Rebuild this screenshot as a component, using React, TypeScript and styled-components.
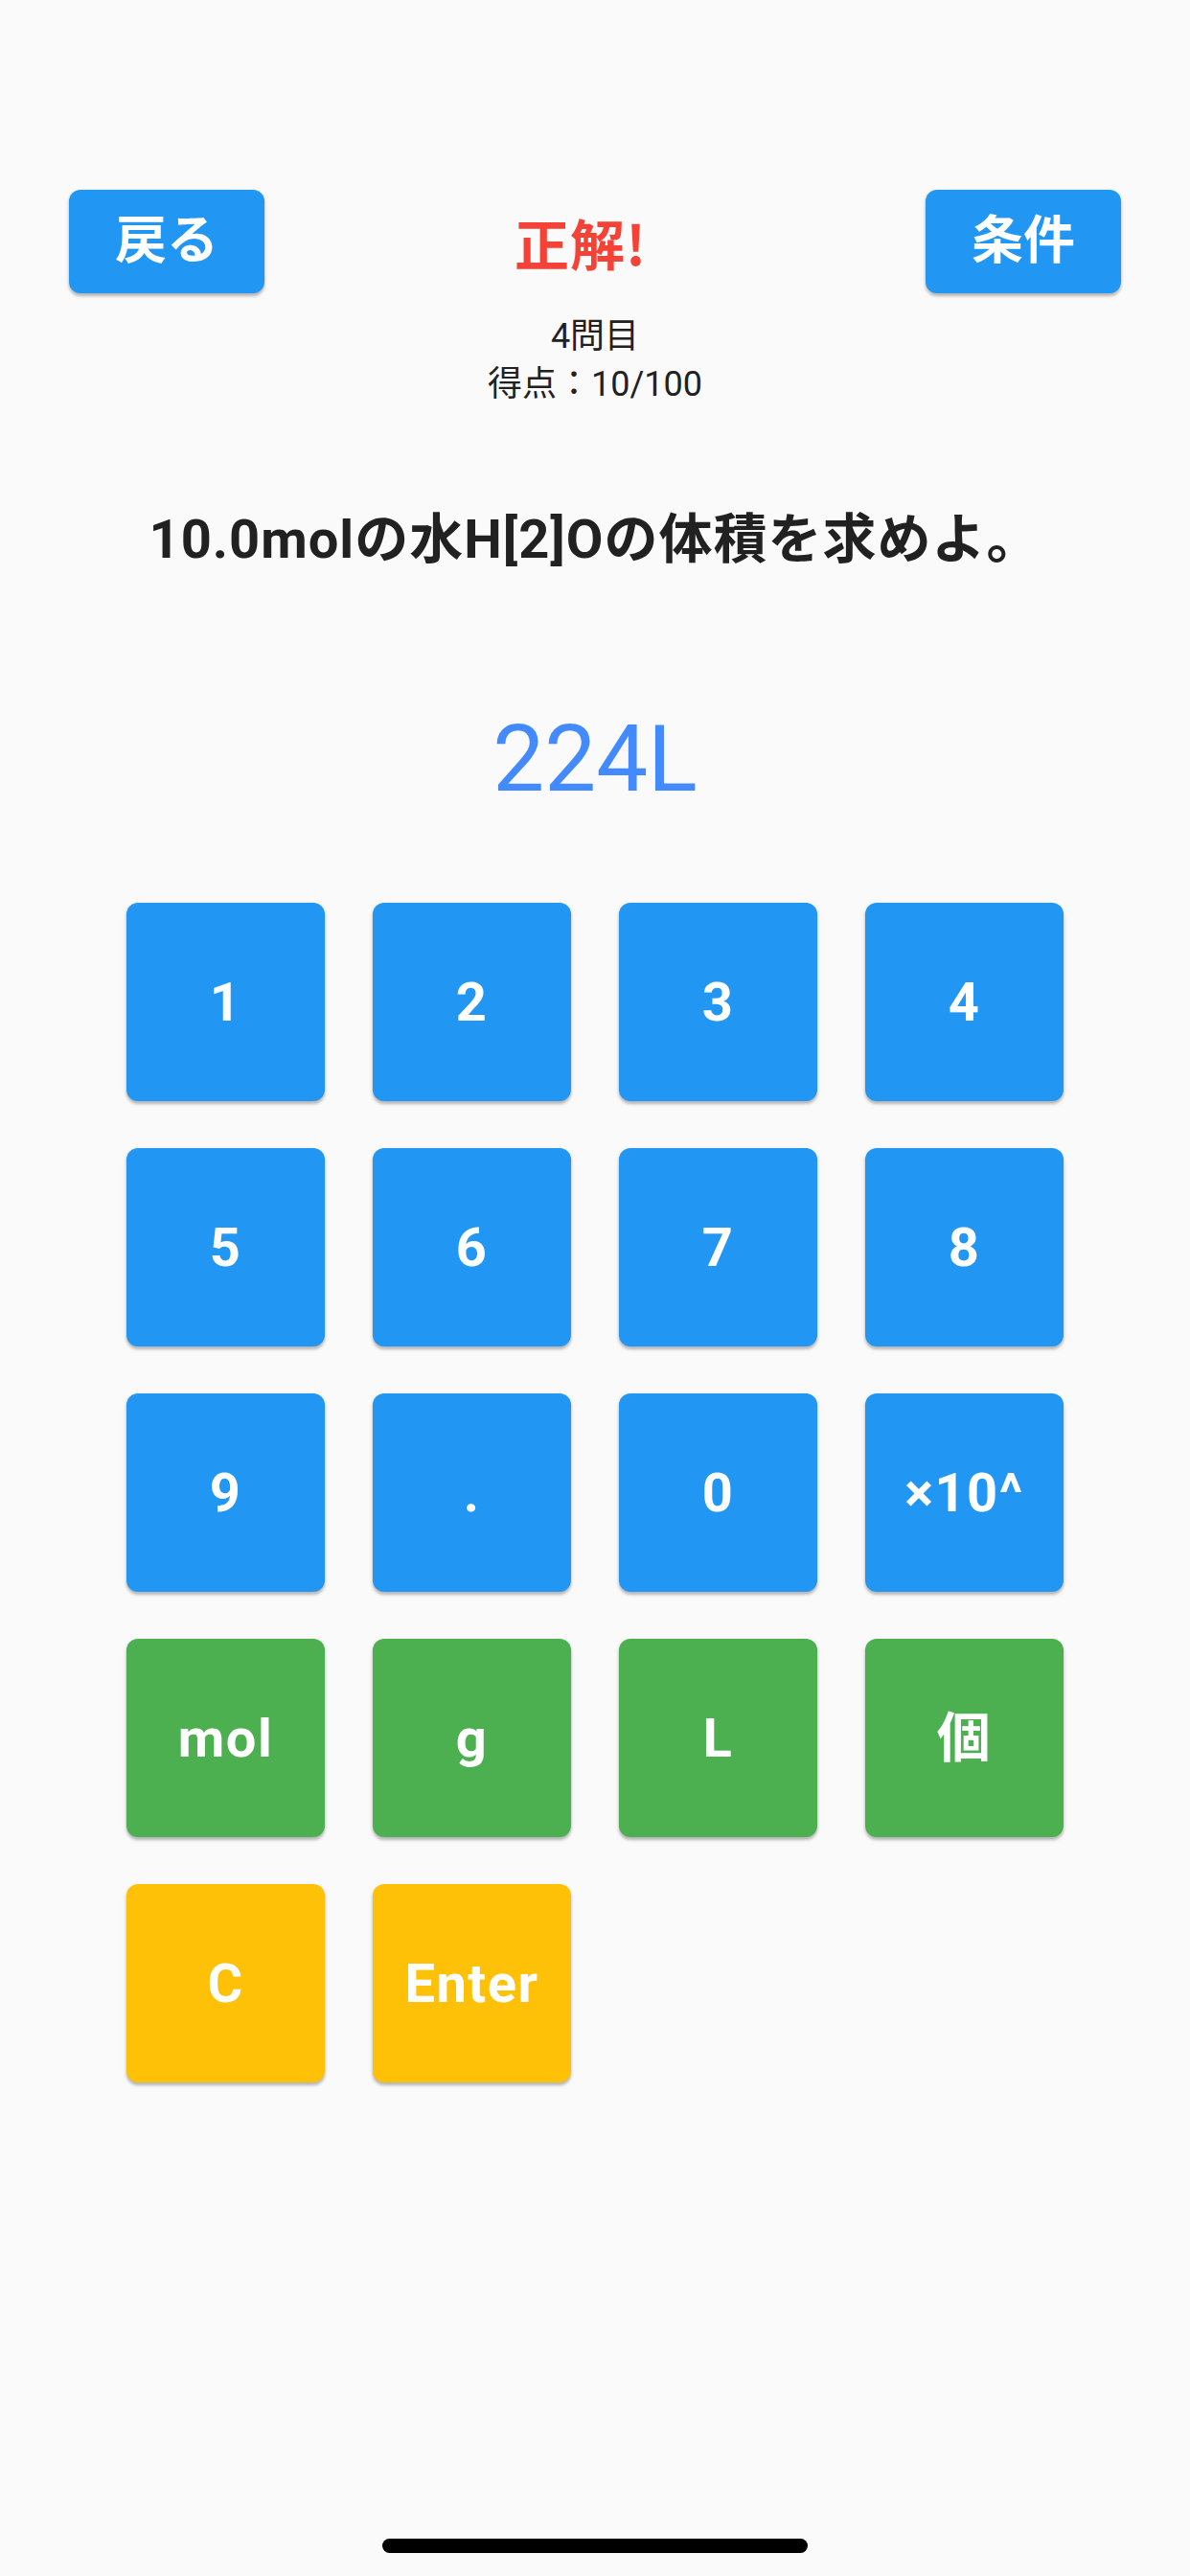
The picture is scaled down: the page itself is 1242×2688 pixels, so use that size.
import React from "react";
import styled, { createGlobalStyle } from "styled-components";

const GlobalStyle = createGlobalStyle`
  html, body {
    margin: 0;
    padding: 0;
    background: #fafafa;
  }
  * { box-sizing: border-box; }
`;

const FONT = `"Roboto", "Noto Sans CJK JP", sans-serif`;

const Page = styled.div`
  width: 1242px;
  min-height: 2688px;
  background: #fafafa;
  display: flex;
  flex-direction: column;
  align-items: stretch;
  font-family: ${FONT};
  color: #212121;
`;

const Header = styled.header`
  display: grid;
  grid-template-columns: 204px 1fr 204px;
  align-items: center;
  padding: 198px 72px 0;
`;

const HeaderButton = styled.button`
  height: 108px;
  width: 204px;
  border: none;
  border-radius: 12px;
  background: #2196f3;
  color: #ffffff;
  font-family: ${FONT};
  font-weight: 700;
  font-size: 54px;
  line-height: 1;
  padding: 0;
  box-shadow: 0 3px 3px rgba(0, 0, 0, 0.2), 0 2px 5px rgba(0, 0, 0, 0.12);
  display: flex;
  align-items: center;
  justify-content: center;
`;

const Title = styled.h1`
  margin: 0;
  padding-right: 30px;
  text-align: center;
  color: #f44336;
  font-family: "Noto Sans CJK JP", sans-serif;
  font-size: 57px;
  font-weight: 700;
  line-height: 1;
  letter-spacing: 1px;
`;

const Info = styled.div`
  margin-top: 20px;
  display: flex;
  flex-direction: column;
  align-items: center;
`;

const InfoLine = styled.div`
  font-size: 36px;
  line-height: 50px;
  font-weight: 400;
  color: #212121;
`;

const Question = styled.p`
  margin: 99px 0 0;
  text-align: center;
  font-size: 56px;
  line-height: 76px;
  font-weight: 700;
  color: #212121;
  letter-spacing: 1px;
`;

const Answer = styled.div`
  margin-top: 137px;
  text-align: center;
  font-size: 96px;
  line-height: 108px;
  font-weight: 400;
  color: #448aff;
`;

const Keypad = styled.div`
  margin-top: 96px;
  display: grid;
  grid-template-columns: repeat(4, 207px);
  grid-auto-rows: 207px;
  column-gap: 50px;
  row-gap: 49px;
  justify-content: center;
`;

type KeyKind = "num" | "unit" | "action";

const KEY_COLORS: Record<KeyKind, string> = {
  num: "#2196f3",
  unit: "#4caf50",
  action: "#ffc107",
};

const Key = styled.button<{ $kind: KeyKind }>`
  border: none;
  border-radius: 12px;
  background: ${(p) => KEY_COLORS[p.$kind]};
  color: #ffffff;
  font-family: ${FONT};
  font-weight: 700;
  font-size: 56px;
  letter-spacing: 1.5px;
  line-height: 1;
  padding: 0;
  box-shadow: 0 3px 3px rgba(0, 0, 0, 0.2), 0 2px 5px rgba(0, 0, 0, 0.12);
  display: flex;
  align-items: center;
  justify-content: center;
  white-space: nowrap;
`;

const HomeIndicator = styled.div`
  margin: auto auto 24px;
  width: 444px;
  height: 15px;
  border-radius: 8px;
  background: #000000;
`;

const keys: { label: string; kind: KeyKind }[] = [
  { label: "1", kind: "num" },
  { label: "2", kind: "num" },
  { label: "3", kind: "num" },
  { label: "4", kind: "num" },
  { label: "5", kind: "num" },
  { label: "6", kind: "num" },
  { label: "7", kind: "num" },
  { label: "8", kind: "num" },
  { label: "9", kind: "num" },
  { label: ".", kind: "num" },
  { label: "0", kind: "num" },
  { label: "×10^", kind: "num" },
  { label: "mol", kind: "unit" },
  { label: "g", kind: "unit" },
  { label: "L", kind: "unit" },
  { label: "個", kind: "unit" },
  { label: "C", kind: "action" },
  { label: "Enter", kind: "action" },
];

export default function App() {
  return (
    <>
      <GlobalStyle />
      <Page>
        <Header>
          <HeaderButton>戻る</HeaderButton>
          <Title>正解!</Title>
          <HeaderButton>条件</HeaderButton>
        </Header>
        <Info>
          <InfoLine>4問目</InfoLine>
          <InfoLine>得点：10/100</InfoLine>
        </Info>
        <Question>10.0molの水H[2]Oの体積を求めよ。</Question>
        <Answer>224L</Answer>
        <Keypad>
          {keys.map((k) => (
            <Key key={k.label} $kind={k.kind}>
              {k.label}
            </Key>
          ))}
        </Keypad>
        <HomeIndicator />
      </Page>
    </>
  );
}
